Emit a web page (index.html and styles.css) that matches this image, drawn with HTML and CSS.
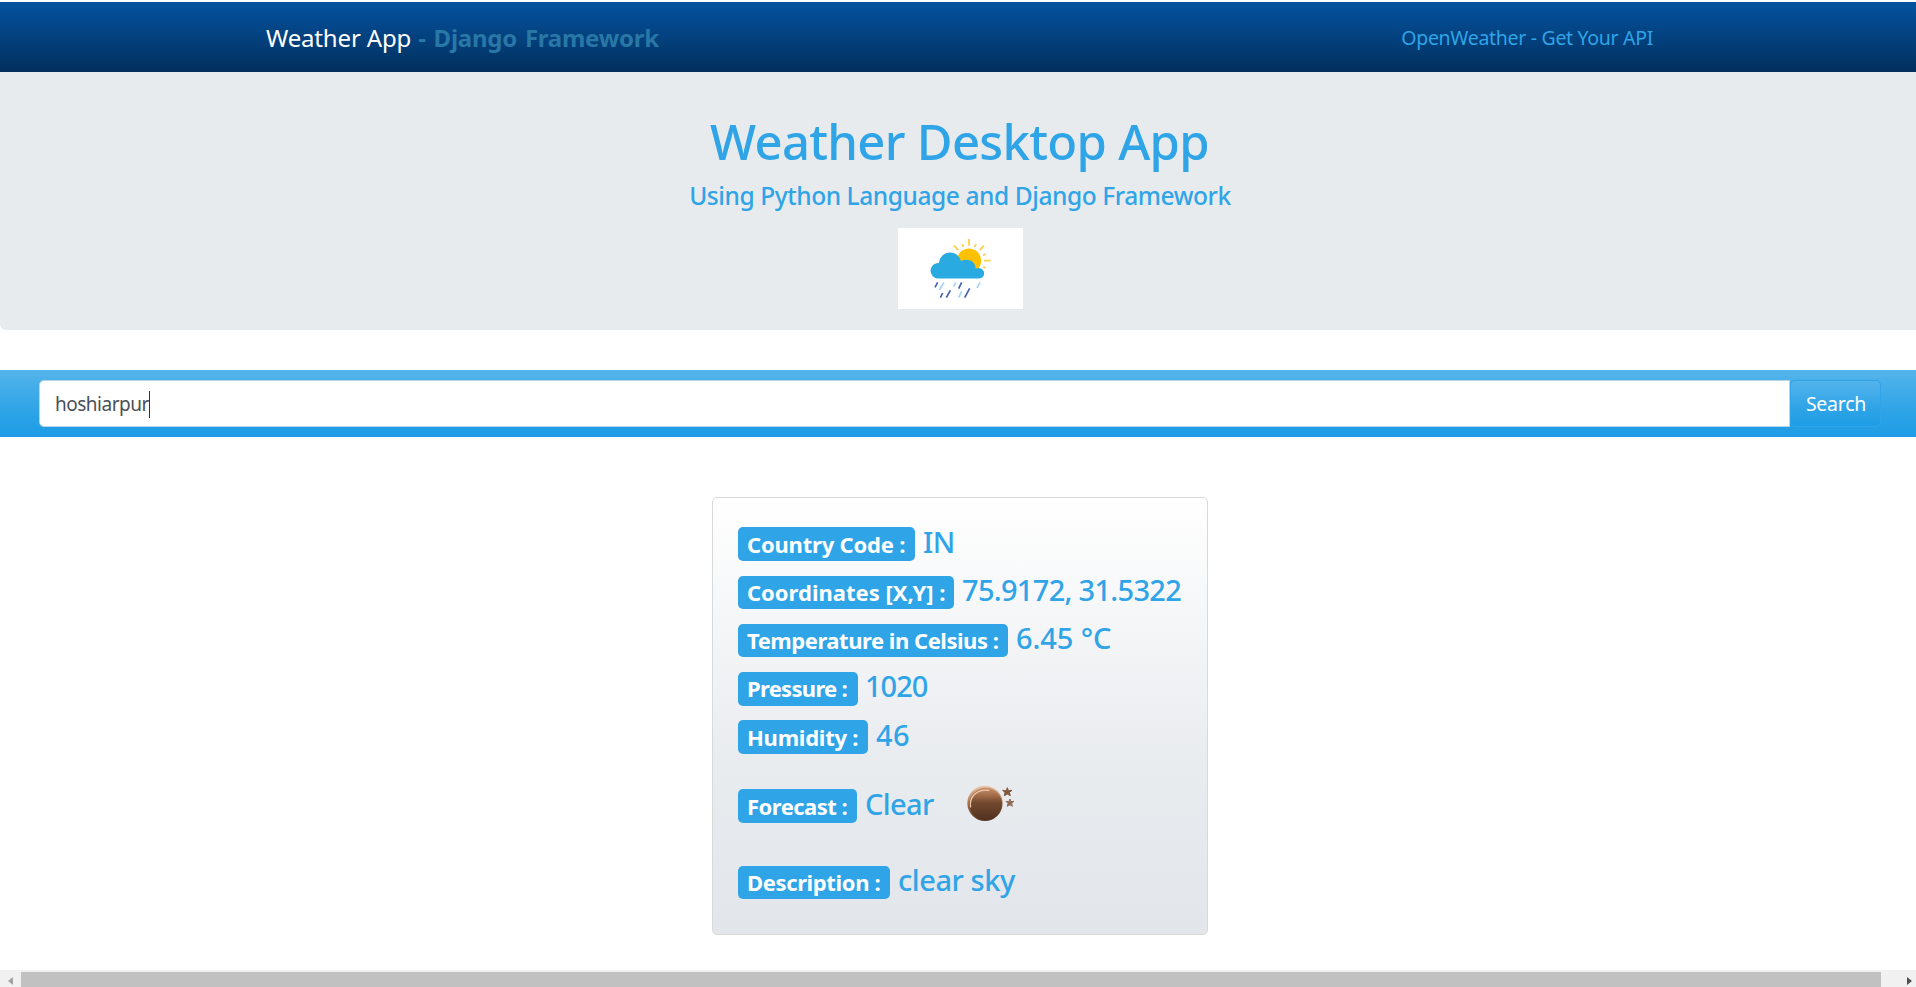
FILE: index.html
```
<!DOCTYPE html>
<html lang="en">
<head>
<meta charset="utf-8">
<title>Weather App</title>
<link rel="stylesheet" href="styles.css">
</head>
<body>
<div class="page">
  <nav class="navbar">
    <a class="brand">Weather App <b>- Django Framework</b></a>
    <a class="nav-link">OpenWeather - Get Your API</a>
  </nav>
  <header class="jumbotron">
    <h1 class="title">Weather Desktop App</h1>
    <h2 class="subtitle">Using Python Language and Django Framework</h2>
    <svg class="logo" viewBox="54 24 375 243">
      <rect x="54" y="24" width="375" height="243" fill="#fff"/>
      <g stroke="#ffd04a" stroke-width="5.5">
        <path d="M267 57V77M222 77L235 91M247 72L250 81M288 72L284 81M312 77L299 90M309 106L317 102M312 122H332M309 140L317 144"/>
      </g>
      <circle cx="267" cy="122" r="36.500" fill="#ffc000"/>
      <path d="M173 175.500A22.500 22.500 0 0 1 177 129A33.500 33.500 0 0 1 243 123Q260 115 276 124Q286 132 287 146Q300 141 308 149Q314 156 312 165Q308 175 297 175.500Z" fill="#29abe2"/>
      <g stroke="#4560b4" stroke-width="5">
        <path d="M173 187L165 202M188 219L181 233M211 211L199 233M245 187L236 206M269 205L254 233"/>
      </g>
      <g stroke="#a5d4f5" stroke-width="5">
        <path d="M192 187L178 210M228 187L221 199M245 214L236 233M300 187L291 204"/>
      </g>
    </svg>
  </header>
  <form class="search">
    <div class="search-input">hoshiarpur<span class="caret"></span></div>
    <button class="search-button" type="button">Search</button>
  </form>
  <section class="card">
    <div class="row row-first"><span class="badge country">Country Code :</span><span class="value">IN</span></div>
    <div class="row"><span class="badge coordinates">Coordinates [X,Y] :</span><span class="value value-coordinates">75.9172, 31.5322</span></div>
    <div class="row"><span class="badge temperature">Temperature in Celsius :</span><span class="value value-temperature">6.45 °C</span></div>
    <div class="row"><span class="badge pressure">Pressure :</span><span class="value value-pressure">1020</span></div>
    <div class="row"><span class="badge humidity">Humidity :</span><span class="value value-humidity">46</span></div>
    <div class="row row-forecast"><span class="badge forecast">Forecast :</span><span class="value">Clear</span>
      <svg class="moon" viewBox="75 40 150 120">
        <defs>
          <linearGradient id="moon-face" x1="0" y1="0" x2="0" y2="1">
            <stop offset="0" stop-color="#c98e68"/><stop offset=".25" stop-color="#a06a48"/><stop offset=".45" stop-color="#74492f"/><stop offset="1" stop-color="#50301f"/>
          </linearGradient>
          <linearGradient id="moon-rim" x1="0" y1="0" x2="0" y2="1">
            <stop offset="0" stop-color="#edc9b0"/><stop offset=".5" stop-color="#a87450"/><stop offset="1" stop-color="#573624"/>
          </linearGradient>
          <filter id="soften"><feGaussianBlur stdDeviation="1.6"/></filter>
        </defs>
        <g filter="url(#soften)">
          <circle cx="135" cy="101" r="53" fill="url(#moon-rim)"/>
          <circle cx="137" cy="103" r="49" fill="url(#moon-face)"/>
          <path d="M92 113C86 82 111 57 148 62" fill="none" stroke="#efc8ac" stroke-width="4"/>
          <path d="M202 54L205 63L216 62L208 68L211 78L202 73L193 78L195 68L188 62L199 63Z" fill="#80573e" stroke="#80573e" stroke-width="3"/>
          <path d="M210 88L213 96L222 95L215 101L217 110L210 105L202 110L204 101L198 95L207 96Z" fill="#926b52" stroke="#926b52" stroke-width="3"/>
        </g>
      </svg>
    </div>
    <div class="row row-description"><span class="badge description">Description :</span><span class="value value-description">clear sky</span></div>
  </section>
  <div class="scrollbar"><i class="arrow arrow-left"></i><div class="thumb"></div><i class="arrow arrow-right"></i></div>
</div>
</body>
</html>
```
FILE: styles.css
```
* { box-sizing: border-box; }
body {
  margin: 0;
  background: #fff;
  color: #2fa4e7;
  font-family: "Noto Sans", "Open Sans", sans-serif;
  overflow: hidden;
}
.page { display: flex; flex-direction: column; width: 1916px; height: 987px; padding-top: 2px; }
.navbar {
  display: flex;
  align-items: center;
  justify-content: space-between;
  height: 70px;
  padding: 0 263px 0 266px;
  background: linear-gradient(#0453a0, #033e78 60%, #022f5c);
}
.brand { color: #fff; font-size: 24px; letter-spacing: -0.16px; }
.brand b { color: #2877a6; letter-spacing: -0.26px; word-spacing: 2px; margin-left: 1px; }
.nav-link { font-size: 19.5px; letter-spacing: -0.31px; }
.jumbotron {
  display: flex;
  flex-direction: column;
  align-items: center;
  height: 258px;
  padding: 40px 0 0 5px;
  background: #e7ebee;
  border-radius: 0 0 0 6px;
}
.title { margin: 0 0 10px -2px; font-size: 49px; font-weight: 500; line-height: 59px; letter-spacing: -0.7px; }
.subtitle { margin: 0 0 17px -1px; font-size: 24.5px; font-weight: 500; line-height: 30px; letter-spacing: -0.42px; }
.logo { width: 125px; height: 81px; }
.search {
  display: flex;
  flex: none;
  height: 67px;
  margin-top: 40px;
  padding: 10px 35px 10px 39px;
  background: linear-gradient(#54b4eb, #2fa4e7 60%, #1d9ce5);
}
.search-input {
  display: flex;
  align-items: center;
  flex: 1;
  padding: 1px 15px 0 15px;
  border: 1px solid #b5d5e9;
  border-radius: 5px 0 0 5px;
  background: #fff;
  color: #495057;
  font-size: 19px;
  letter-spacing: -0.5px;
}
.caret { width: 1px; height: 27px; background: #333; }
.search-button {
  width: 91px;
  padding: 0 0 1px 1px;
  border: 1px solid #2fa4e7;
  border-radius: 5px;
  background: linear-gradient(#54b4eb, #2fa4e7 60%, #1d9ce5);
  color: #fff;
  font: 19.5px "Noto Sans", sans-serif;
  letter-spacing: -0.27px;
}
.card {
  flex: none;
  width: 496px;
  height: 438px;
  margin: 60px 0 35px 712px;
  padding: 29px 0 0 25px;
  border: 1px solid #d7d9db;
  border-radius: 5px;
  background: linear-gradient(#fff, #e9ecef 60%, #e2e5ea);
}
.row { display: flex; align-items: baseline; height: 34px; margin-bottom: 14px; }
.row-first { margin-bottom: 15px; }
.row-forecast { margin-top: 35px; }
.row-description { margin-top: 43px; }
.badge {
  height: 34px;
  padding: 1px 0 0 9px;
  border-radius: 5px;
  background: #2fa4e7;
  color: #fff;
  font-size: 22px;
  font-weight: 700;
  line-height: 33px;
  white-space: nowrap;
}
.coordinates, .temperature, .description { height: 33px; padding-top: 0; }
.country { width: 177px; letter-spacing: -0.2px; }
.coordinates { width: 216px; }
.temperature { width: 270px; letter-spacing: -0.47px; }
.pressure { width: 120px; padding-top: 0; letter-spacing: -0.7px; }
.humidity { width: 130px; letter-spacing: -0.24px; }
.forecast { width: 119px; letter-spacing: -0.52px; }
.description { width: 152px; letter-spacing: -0.37px; }
.value { margin-left: 8px; font-size: 29px; font-weight: 500; line-height: 28px; letter-spacing: -0.6px; }
.value-coordinates { letter-spacing: -0.7px; }
.value-temperature { letter-spacing: -0.1px; margin-left: 8px; }
.value-pressure { letter-spacing: -1px; margin-left: 7px; }
.value-humidity { letter-spacing: 0.4px; }
.value-description { letter-spacing: -0.42px; }
.moon { align-self: flex-start; flex: none; width: 50px; height: 40px; margin: -6px 0 0 31px; }
.scrollbar {
  display: flex;
  flex: none;
  align-items: flex-end;
  justify-content: space-between;
  height: 17px;
  padding: 0 4px 0 8px;
  background: #f1f1f1;
}
.thumb { flex: none; width: 1860px; height: 15px; margin-left: 8px; margin-right: auto; background: #c1c1c1; }
.arrow { width: 0; height: 0; margin-bottom: 2px; border: 4px solid transparent; }
.arrow-left { border-left-width: 0; border-right: 5px solid #a3a3a3; }
.arrow-right { border-right-width: 0; border-left: 5px solid #505050; }
```
